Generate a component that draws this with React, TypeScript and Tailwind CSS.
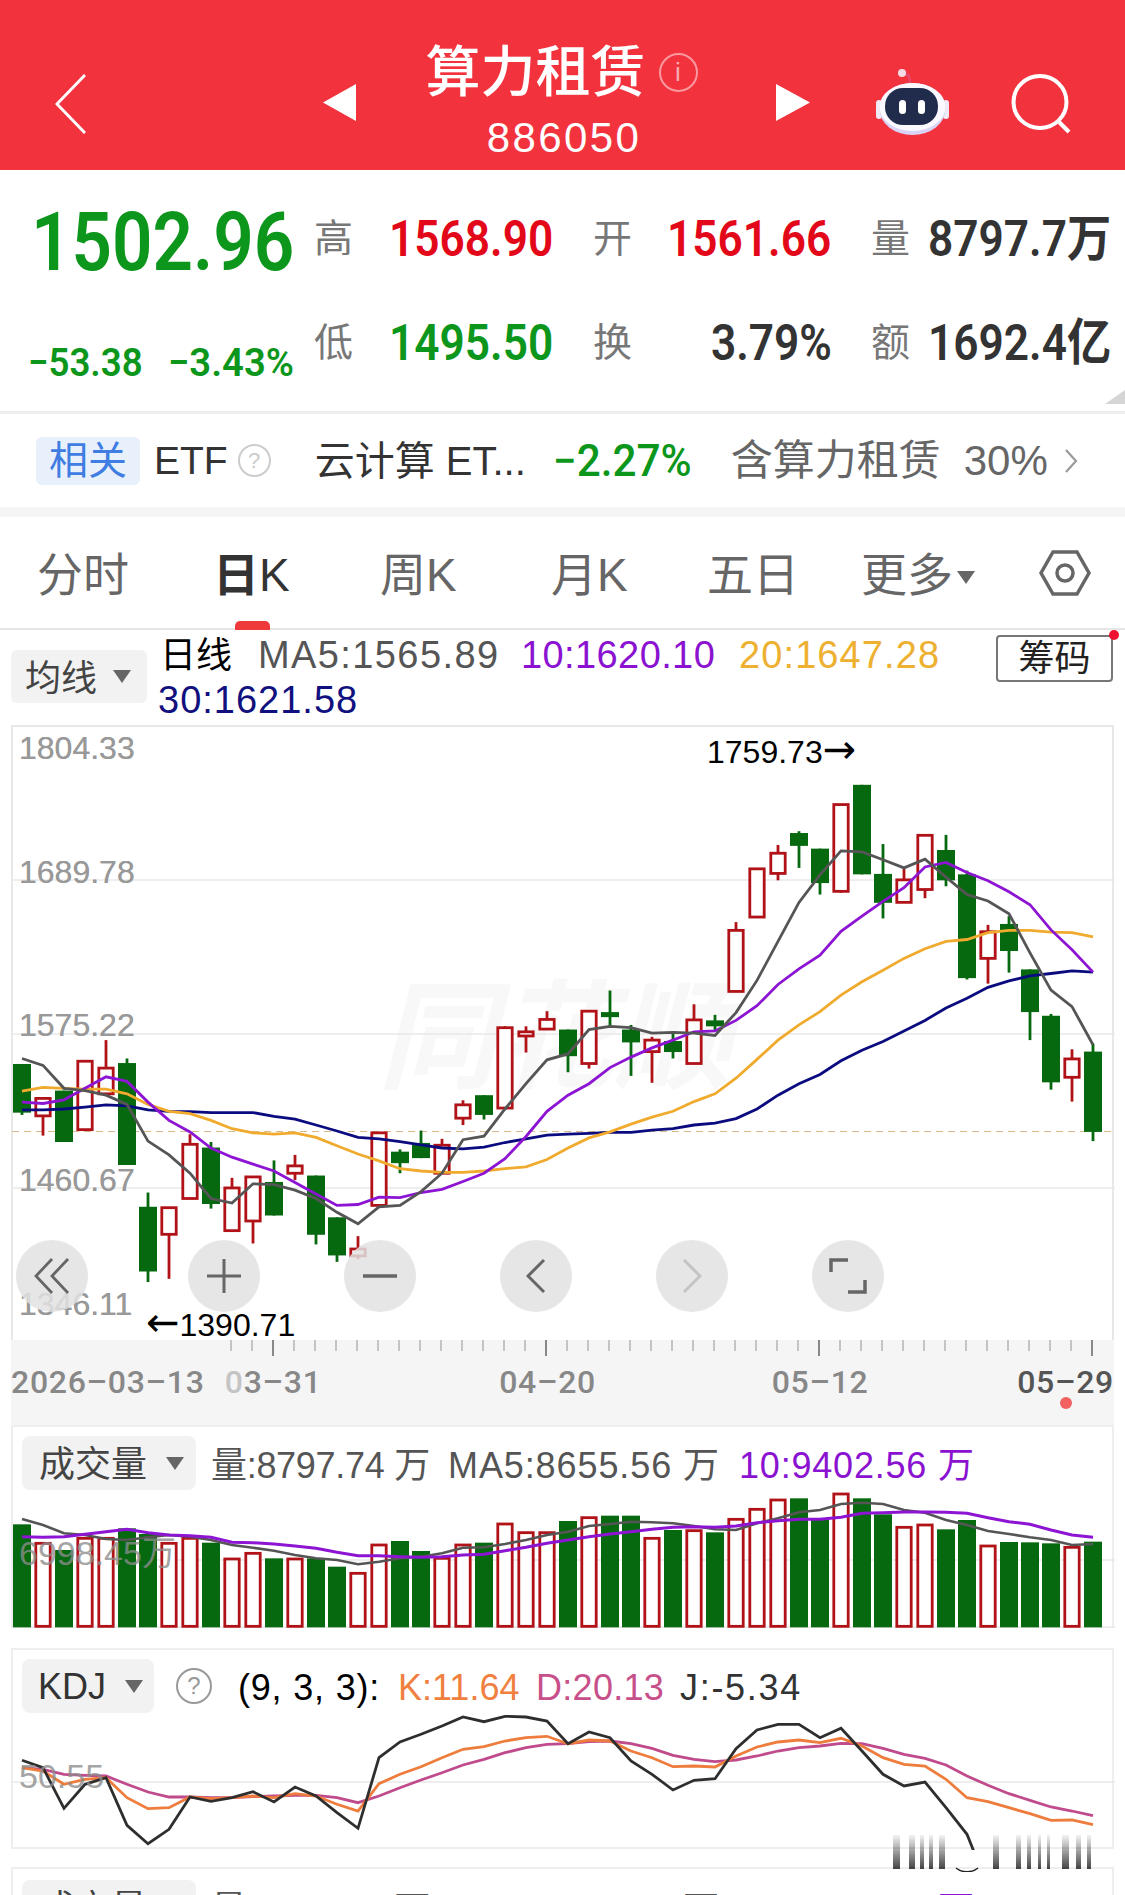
const GREEN = '#07690f';
const RED = '#b01218';

type Candle = [0 | 1, number, number, number, number];

// [up, bodyTop, bodyBottom, wickTop, wickBottom]
const candles: Candle[] = [
  [0, 747, 853, 747, 858], [1, 822, 860, 822, 903], [0, 805, 917, 805, 917], [1, 741, 890, 741, 890],
  [1, 756, 812, 695, 812], [0, 745, 967, 735, 967], [0, 1058, 1199, 1027, 1222], [1, 1060, 1118, 1060, 1215],
  [1, 922, 1040, 900, 1040], [0, 929, 1052, 917, 1062], [1, 1017, 1110, 995, 1110], [1, 993, 1089, 993, 1138],
  [0, 1004, 1077, 957, 1077], [1, 969, 985, 945, 1000], [0, 990, 1119, 990, 1140], [0, 1081, 1164, 1081, 1178],
  [1, 1150, 1165, 1122, 1172], [1, 897, 1055, 897, 1055], [0, 938, 963, 933, 985], [0, 919, 952, 892, 952],
  [1, 924, 985, 910, 985], [1, 836, 865, 826, 880], [0, 815, 858, 815, 868], [1, 668, 843, 665, 843],
  [1, 677, 686, 665, 722], [1, 650, 671, 632, 671], [0, 672, 730, 672, 765], [1, 632, 746, 632, 757],
  [0, 634, 645, 587, 665], [0, 672, 700, 662, 773], [1, 695, 720, 688, 788], [0, 697, 721, 680, 735],
  [1, 651, 746, 617, 746], [0, 652, 665, 640, 675], [1, 456, 589, 438, 589], [1, 322, 427, 322, 427],
  [1, 288, 332, 270, 347], [0, 244, 272, 240, 320], [0, 278, 353, 278, 378], [1, 182, 371, 182, 374],
  [0, 139, 334, 139, 334], [0, 333, 396, 268, 430], [1, 346, 395, 322, 395], [1, 249, 367, 249, 386],
  [0, 281, 347, 248, 360], [0, 334, 560, 326, 563], [1, 459, 517, 444, 572], [0, 442, 501, 425, 548],
  [0, 541, 634, 541, 695], [0, 642, 787, 638, 803], [1, 736, 776, 715, 829], [0, 720, 895, 703, 915],
];

const ma5 = [735, 750, 800, 805, 815, 835, 915, 945, 985, 1040, 1050, 1008, 1010, 1022, 1040, 1070, 1095, 1058, 1055, 1025, 985, 912, 904, 845, 790, 738, 725, 672, 665, 668, 680, 678, 680, 685, 635, 565, 480, 395, 335, 283, 285, 302, 320, 301, 340, 378, 392, 420, 505, 586, 622, 705];
const ma10 = [830, 833, 825, 800, 775, 785, 830, 870, 895, 930, 950, 965, 980, 1005, 1030, 1055, 1053, 1037, 1038, 1027, 1020, 1003, 985, 953, 905, 850, 815, 790, 755, 732, 712, 695, 677, 675, 652, 620, 574, 540, 510, 458, 425, 393, 363, 318, 308, 330, 348, 372, 400, 455, 498, 547];
const ma20 = [806, 798, 800, 802, 802, 812, 835, 850, 855, 870, 888, 897, 900, 897, 907, 925, 943, 958, 975, 980, 983, 983, 980, 975, 971, 955, 930, 908, 895, 878, 863, 850, 829, 812, 778, 737, 695, 662, 633, 597, 568, 543, 517, 496, 480, 476, 461, 456, 456, 460, 461, 470];
const ma30 = [847, 847, 845, 841, 836, 838, 847, 850, 851, 853, 853, 853, 861, 867, 880, 893, 907, 910, 916, 923, 930, 932, 928, 918, 910, 902, 900, 898, 896, 896, 891, 888, 880, 876, 866, 845, 815, 790, 770, 740, 717, 698, 675, 652, 625, 604, 580, 566, 555, 550, 544, 547];

const volumes = [313, 370, 390, 355, 355, 325, 342, 370, 355, 368, 417, 400, 415, 417, 415, 440, 460, 375, 363, 393, 415, 375, 368, 312, 338, 338, 303, 293, 287, 287, 355, 330, 332, 337, 298, 268, 240, 235, 300, 222, 235, 283, 322, 315, 328, 300, 378, 366, 367, 370, 382, 365];
const volMa5 = [297, 315, 340, 345, 357, 360, 352, 345, 350, 360, 375, 383, 392, 405, 415, 420, 433, 425, 415, 410, 400, 383, 382, 372, 360, 345, 335, 318, 312, 305, 307, 310, 318, 328, 330, 310, 295, 277, 270, 252, 248, 252, 270, 278, 300, 315, 333, 342, 352, 360, 375, 372];
const volMa10 = [350, 352, 350, 343, 335, 328, 338, 345, 347, 352, 367, 368, 372, 378, 385, 397, 407, 407, 410, 412, 410, 405, 403, 392, 382, 370, 360, 350, 342, 335, 328, 322, 320, 322, 318, 308, 302, 298, 298, 292, 280, 278, 276, 276, 277, 280, 293, 305, 313, 330, 345, 352];

const kdjJ = [1018, 1040, 1162, 1090, 1070, 1213, 1268, 1225, 1128, 1141, 1130, 1112, 1143, 1098, 1125, 1175, 1222, 1010, 963, 940, 915, 888, 902, 886, 888, 900, 968, 933, 950, 1020, 1060, 1107, 1078, 1073, 983, 927, 910, 910, 950, 922, 990, 1060, 1095, 1083, 1160, 1240];
const kdjK = [1040, 1050, 1090, 1075, 1070, 1130, 1163, 1160, 1128, 1133, 1130, 1125, 1130, 1118, 1125, 1150, 1170, 1088, 1060, 1037, 1010, 985, 977, 960, 950, 946, 968, 957, 960, 990, 1010, 1037, 1035, 1038, 1005, 978, 963, 957, 965, 952, 975, 1010, 1030, 1035, 1075, 1130, 1142, 1160, 1178, 1198, 1197, 1211];
const kdjD = [1040, 1045, 1060, 1063, 1065, 1090, 1113, 1128, 1128, 1130, 1130, 1127, 1125, 1123, 1123, 1130, 1145, 1125, 1100, 1077, 1055, 1032, 1015, 995, 980, 970, 968, 962, 960, 968, 982, 1003, 1015, 1022, 1017, 1005, 990, 980, 975, 967, 968, 982, 1000, 1012, 1032, 1065, 1093, 1118, 1138, 1158, 1170, 1184];

const cx = (i: number) => 21 + 21 * i;
const py = (z: number) => 720 + z / 2.178;
const ly = (z: number) => 1420 + z / 3;
const points = (values: number[], y: (z: number) => number) => values.map((v, i) => `${cx(i)},${y(v).toFixed(1)}`).join(' ');

function PriceChart() {
  return (
    <svg className="absolute -left-px -top-px" width={1103} height={615} viewBox="11 725 1103 615">
      {[879, 1033, 1187].map((y) => (
        <line key={y} x1={11} x2={1114} y1={y} y2={y} stroke="#e8e8e8" strokeWidth={1.5} />
      ))}
      <line x1={11} x2={1114} y1={1130.5} y2={1130.5} stroke="#d9b98c" strokeWidth={1} strokeDasharray="7 5" />
      {candles.map(([up, top, bottom, wickTop, wickBottom], i) => {
        const x = cx(i);
        const color = up ? RED : GREEN;
        return (
          <g key={i}>
            <line x1={x} x2={x} y1={py(wickTop)} y2={py(wickBottom)} stroke={color} strokeWidth={2.8} />
            {up ? (
              <rect x={x - 7.2} y={py(top)} width={14.4} height={py(bottom) - py(top)} fill="#fff" stroke={color} strokeWidth={2.8} />
            ) : (
              <rect x={x - 9} y={py(top)} width={18} height={py(bottom) - py(top)} fill={color} />
            )}
          </g>
        );
      })}
      <polyline points={points(ma30, py)} fill="none" stroke="#0b0b80" strokeWidth={2.8} />
      <polyline points={points(ma20, py)} fill="none" stroke="#f0ab2e" strokeWidth={2.8} />
      <polyline points={points(ma10, py)} fill="none" stroke="#8c14d2" strokeWidth={2.8} />
      <polyline points={points(ma5, py)} fill="none" stroke="#555555" strokeWidth={2.8} />
    </svg>
  );
}

function VolumeChart() {
  const base = ly(622);
  return (
    <svg className="absolute -left-px -top-px" width={1103} height={203} viewBox="11 1426 1103 203">
      <line x1={11} x2={1114} y1={1560} y2={1560} stroke="#e8e8e8" strokeWidth={1.5} />
      <line x1={11} x2={1114} y1={base} y2={base} stroke="#e8e8e8" strokeWidth={1.5} />
      {volumes.map((v, i) => {
        const x = cx(i);
        return candles[i][0] ? (
          <rect key={i} x={x - 7.2} y={ly(v)} width={14.4} height={base - ly(v) - 1} fill="#fff" stroke={RED} strokeWidth={2.8} />
        ) : (
          <rect key={i} x={x - 9} y={ly(v)} width={18} height={base - ly(v)} fill={GREEN} />
        );
      })}
      <polyline points={points(volMa5, ly)} fill="none" stroke="#555555" strokeWidth={2.6} />
      <polyline points={points(volMa10, ly)} fill="none" stroke="#8c14d2" strokeWidth={3} />
    </svg>
  );
}

function KdjChart() {
  const lastJ = `${points(kdjJ, ly)} ${cx(45) + 8},${ly(1300)}`;
  return (
    <svg className="absolute -left-px -top-px" width={1103} height={201} viewBox="11 1648 1103 201">
      <line x1={11} x2={1114} y1={1781} y2={1781} stroke="#e8e8e8" strokeWidth={1.5} />
      <polyline points={points(kdjD, ly)} fill="none" stroke="#c04b8c" strokeWidth={2.8} />
      <polyline points={points(kdjK, ly)} fill="none" stroke="#ee7c3c" strokeWidth={2.8} />
      <polyline points={lastJ} fill="none" stroke="#2e2e2e" strokeWidth={2.8} />
    </svg>
  );
}

function Robot() {
  return (
    <svg width={74} height={68} viewBox="0 0 74 68">
      <path d="M28 5C33 5 35 9 35 15" fill="none" stroke="#e5486a" strokeWidth={2.5} />
      <circle cx={27} cy={5} r={4} fill="#f3dce6" />
      <rect x={1} y={32} width={6} height={19} rx={3} fill="#f1e9f6" />
      <rect x={68} y={32} width={6} height={19} rx={3} fill="#f1e9f6" />
      <ellipse cx={37.5} cy={41} rx={33} ry={26} fill="#d9d4f6" />
      <ellipse cx={37.5} cy={39} rx={33} ry={24} fill="#fbf9ff" />
      <rect x={10} y={20} width={53} height={37} rx={18} fill="#212c4c" />
      <rect x={24} y={32} width={7} height={14} rx={3.5} fill="#fff" />
      <rect x={43} y={32} width={7} height={14} rx={3.5} fill="#fff" />
    </svg>
  );
}

const Caret = ({ className }: { className: string }) => (
  <svg className={className} width={18} height={13} viewBox="0 0 18 13">
    <path d="M0 0H18L9 13Z" fill="#666" />
  </svg>
);

const chartButton = 'w-[72px] h-[72px] rounded-full bg-[#e2e2e2]/85 flex items-center justify-center shrink-0';
const cell = 'flex items-center';
const label = 'text-[39px] text-[#777]';
const value = "font-['Roboto','Noto_Sans_CJK_SC',sans-serif] text-[50px] font-semibold origin-left scale-x-[0.885] whitespace-nowrap -ml-px";
const axisLabel = "absolute left-[6px] text-[32px] leading-[36px] text-[#999] [text-shadow:0_0_0.6px_#999]";

export default function App() {
  return (
    <div className="relative w-[1125px] h-[1895px] overflow-hidden bg-white font-['Liberation_Sans','Noto_Sans_CJK_SC',sans-serif]">
      {/* Red title bar */}
      <header className="h-[170px] bg-[#f2333e] flex text-white">
        <div className="w-[323px] pl-[55px] pt-[74px]">
          <svg width={31} height={60} viewBox="0 0 31 60">
            <path d="M30 1L2 30L30 59" fill="none" stroke="#fff" strokeWidth={3} />
          </svg>
        </div>
        <svg width={33} height={37} viewBox="0 0 33 37" className="mt-[84px]">
          <path d="M33 0V37L0 18.5Z" fill="#fff" />
        </svg>
        <div className="w-[420px] flex flex-col items-center">
          <div className="flex items-center h-[80px] mt-[32px] -ml-[9px]">
            <span className="text-[55px] leading-none font-medium">算力租赁</span>
            <span className="ml-[13px] w-[39px] h-[39px] rounded-full border-2 border-white/50 text-white/60 text-[26px] leading-none flex items-center justify-center">i</span>
          </div>
          <span className="text-[42px] leading-none tracking-[2.4px] mt-[5px] -ml-[4px]">886050</span>
        </div>
        <svg width={34} height={37} viewBox="0 0 34 37" className="mt-[84px]">
          <path d="M0 0V37L34 18.5Z" fill="#fff" />
        </svg>
        <div className="ml-[65px] pt-[68px]">
          <Robot />
        </div>
        <svg width={60} height={60} viewBox="0 0 60 60" className="ml-[62px] mt-[74px]">
          <ellipse cx={29} cy={28} rx={26.5} ry={26} fill="none" stroke="#fff" strokeWidth={4} />
          <path d="M47 47L58 58" fill="none" stroke="#fff" strokeWidth={4} />
        </svg>
      </header>

      {/* Quote block */}
      <section className="relative h-[241px] pt-[17px] grid grid-cols-[314px_76px_162px_41px_75px_164px_39px_58px_181px] grid-rows-[104px_104px] font-['Roboto','Noto_Sans_CJK_SC',sans-serif]">
        <div className="text-[82px] leading-none font-semibold text-[#0d961c] ml-[31px] origin-left scale-x-[0.865] self-center mt-[5px] whitespace-nowrap">1502.96</div>
        <div className={`${cell} ${label}`}>高</div>
        <div className={`${cell} ${value} text-[#e3071a]`}>1568.90</div>
        <div />
        <div className={`${cell} ${label}`}>开</div>
        <div className={`${cell} ${value} text-[#e3071a]`}>1561.66</div>
        <div />
        <div className={`${cell} ${label}`}>量</div>
        <div className={`${cell} ${value} text-[#333]`}>8797.7万</div>

        <div className="flex pl-[28px] pt-[53px] text-[39px] leading-none font-semibold text-[#0d961c] whitespace-nowrap">
          <span className="w-[140px] origin-left scale-x-[0.94]">−53.38</span>
          <span className="origin-left scale-x-[0.98]">−3.43%</span>
        </div>
        <div className={`${cell} ${label}`}>低</div>
        <div className={`${cell} ${value} text-[#0d961c]`}>1495.50</div>
        <div />
        <div className={`${cell} ${label}`}>换</div>
        <div className={`${cell} ${value} text-[#333] justify-end origin-right`}>3.79%</div>
        <div />
        <div className={`${cell} ${label}`}>额</div>
        <div className={`${cell} ${value} text-[#333]`}>1692.4亿</div>
        <svg className="absolute right-0 bottom-[7px]" width={20} height={14} viewBox="0 0 20 14">
          <path d="M20 0V14H0Z" fill="#d5d5d5" />
        </svg>
      </section>

      {/* Related ETF row */}
      <section className="h-[96px] border-t-[3px] border-[#eeeeee] flex items-center pl-[36px] text-[39px] leading-none">
        <span className="w-[104px] h-[48px] rounded-[6px] bg-[#e8f0fc] text-[#3f7de2] flex items-center justify-center">相关</span>
        <span className="ml-[14px] text-[#333]">ETF</span>
        <span className="ml-[10px] w-[33px] h-[33px] rounded-full border-2 border-[#ccc] text-[#ccc] text-[22px] flex items-center justify-center">?</span>
        <span className="ml-[44px] w-[238px] text-[40px] text-[#333] whitespace-nowrap">云计算 ET...</span>
        <span className="w-[178px] text-[#0d961c] text-[44px] font-['Roboto',sans-serif] font-medium origin-left scale-x-[0.96]">−2.27%</span>
        <span className="w-[233px] text-[#666] text-[42px]">含算力租赁</span>
        <span className="w-[100px] text-[#666] text-[42px]">30%</span>
        <svg width={14} height={26} viewBox="0 0 14 26">
          <path d="M2 2L12 13L2 24" fill="none" stroke="#999" strokeWidth={2.2} />
        </svg>
      </section>
      <div className="h-[10px] bg-[#f5f5f5]" />

      {/* Period tabs */}
      <nav className="relative h-[113px] border-b-2 border-[#e6e6e6] pl-[37px] flex items-start pt-[33px] text-[46px] leading-[50px] text-[#666]">
        <span className="w-[176px]">分时</span>
        <span className="w-[167px] text-[#333] font-medium">
          <span className="font-bold">日</span>K
        </span>
        <span className="w-[171px]">周K</span>
        <span className="w-[156px]">月K</span>
        <span className="w-[154px]">五日</span>
        <span className="w-[178px] flex items-center">
          更多
          <Caret className="ml-[4px] mt-[4px]" />
        </span>
        <svg width={52} height={46} viewBox="0 0 52 46">
          <path d="M14 2H38L50 23L38 44H14L2 23Z" fill="none" stroke="#666" strokeWidth={3.5} />
          <circle cx={26} cy={23} r={8} fill="none" stroke="#666" strokeWidth={3.5} />
        </svg>
        <span className="absolute left-[235px] -bottom-[2px] w-[35px] h-[9px] rounded-t-[5px] bg-[#ee3a3a]" />
      </nav>

      {/* MA legend */}
      <section className="relative h-[95px] flex pl-[11px] pt-[3px] text-[38px] leading-[45px] tracking-[1.3px] whitespace-nowrap">
        <div className="mt-[17px] w-[136px] h-[53px] rounded-[6px] bg-[#f2f2f2] flex items-center pl-[14px] pt-[4px] text-[#444] text-[36px] tracking-normal">
          均线
          <Caret className="ml-[16px] -mt-[4px]" />
        </div>
        <div className="ml-[11px]">
          <div className="flex">
            <span className="w-[100px] pl-[2px] tracking-normal text-[36px] text-black">日线</span>
            <span className="w-[263px] text-[#555] tracking-[1.4px]">MA5:1565.89</span>
            <span className="w-[218px] text-[#8a12d0] tracking-[0.4px]">10:1620.10</span>
            <span className="text-[#eeb030] tracking-[1.1px]">20:1647.28</span>
          </div>
          <div className="text-[#10107e] tracking-[1px]">30:1621.58</div>
        </div>
        <div className="absolute left-[996px] top-[5px] w-[117px] h-[47px] rounded-[4px] border-2 border-[#777] text-[36px] leading-[43px] tracking-normal text-center text-[#222]">
          筹码
        </div>
        <span className="absolute left-[1109px] top-[0px] w-[10px] h-[10px] rounded-full bg-[#f01030]" />
      </section>

      {/* Candlestick chart */}
      <section className="relative mx-[11px] h-[615px] border-x-2 border-t-2 border-[#e8e8e8]">
        <span className="absolute left-[365px] top-[252px] text-[118px] leading-none font-bold italic text-[#f8f8f8]">同花顺</span>
        <PriceChart />
        <span className={`${axisLabel} top-[3px]`}>1804.33</span>
        <span className={`${axisLabel} top-[127px]`}>1689.78</span>
        <span className={`${axisLabel} top-[280px]`}>1575.22</span>
        <span className={`${axisLabel} top-[435px]`}>1460.67</span>
        <span className={`${axisLabel} top-[559px]`}>1346.11</span>
        <span className="absolute left-[694px] top-[4px] text-[32px] leading-[36px] text-black whitespace-nowrap">
          1759.73<span className="font-['DejaVu_Sans'] text-[40px]">→</span>
        </span>
        <span className="absolute left-[133px] top-[577px] text-[32px] leading-[36px] text-black whitespace-nowrap">
          <span className="font-['DejaVu_Sans'] text-[40px]">←</span>1390.71
        </span>
        <div className="absolute left-[3px] top-[513px] flex">
          <div className={chartButton}>
            <svg width={36} height={38} viewBox="0 0 36 38">
              <path d="M18 2L2 19L18 36M34 2L18 19L34 36" fill="none" stroke="#666" strokeWidth={2.8} />
            </svg>
          </div>
          <div className={`${chartButton} ml-[100px]`}>
            <svg width={34} height={34} viewBox="0 0 34 34">
              <path d="M17 0V34M0 17H34" fill="none" stroke="#666" strokeWidth={3} />
            </svg>
          </div>
          <div className={`${chartButton} ml-[84px]`}>
            <svg width={34} height={4} viewBox="0 0 34 4">
              <path d="M0 2H34" fill="none" stroke="#666" strokeWidth={3.4} />
            </svg>
          </div>
          <div className={`${chartButton} ml-[84px]`}>
            <svg width={20} height={36} viewBox="0 0 20 36">
              <path d="M18 2L2 18L18 34" fill="none" stroke="#666" strokeWidth={3} />
            </svg>
          </div>
          <div className={`${chartButton} ml-[84px]`}>
            <svg width={20} height={36} viewBox="0 0 20 36">
              <path d="M2 2L18 18L2 34" fill="none" stroke="#c4c4c4" strokeWidth={3} />
            </svg>
          </div>
          <div className={`${chartButton} ml-[84px]`}>
            <svg width={38} height={38} viewBox="0 0 38 38">
              <path d="M2 15V3H19M36 23V35H19" fill="none" stroke="#666" strokeWidth={3.5} />
            </svg>
          </div>
        </div>
      </section>

      {/* Date axis */}
      <section className="relative mx-[11px] h-[85px] bg-[#f5f5f5] font-['Roboto',sans-serif] text-[32px] leading-none font-medium tracking-[0.7px] text-[#888]">
        <svg className="absolute left-0 top-0" width={1103} height={20} viewBox="11 1340 1103 20">
          {candles.map((_, i) =>
            i < 10 ? null : (
              <line
                key={i}
                x1={cx(i)}
                x2={cx(i)}
                y1={1340}
                y2={(i - 12) % 13 === 0 ? 1356 : 1351}
                stroke={(i - 12) % 13 === 0 ? '#888' : '#c4c4c4'}
                strokeWidth={2}
              />
            ),
          )}
        </svg>
        <div className="flex pt-[26px] whitespace-nowrap">
          <span className="w-[215px]">2026–03–13</span>
          <span className="w-[276px]">
            <span className="text-[#c4c4c4]">0</span>3–31
          </span>
          <span className="w-[274px]">04–20</span>
          <span className="w-[247px]">05–12</span>
          <span className="text-[#555]">05–29</span>
        </div>
        <span className="absolute left-[1049px] top-[57px] w-[12px] h-[12px] rounded-full bg-[#f26060]" />
      </section>

      {/* Volume panel */}
      <section className="relative mx-[11px] h-[203px] border-x-2 border-t-2 border-[#eeeeee]">
        <VolumeChart />
        <div className="relative flex items-center h-[54px] mt-[9px] ml-[9px] text-[36px] leading-none whitespace-nowrap">
          <div className="w-[174px] h-[54px] rounded-[8px] bg-[#f2f2f2] flex items-center pl-[17px] pt-[3px] text-[#444]">
            成交量
            <Caret className="ml-[19px] -mt-[3px]" />
          </div>
          <span className="ml-[15px] pt-[6px] w-[237px] text-[#555] tracking-[-0.3px]">量:8797.74 万</span>
          <span className="w-[291px] pt-[6px] text-[#555] tracking-[0.9px]">MA5:8655.56 万</span>
          <span className="text-[#8a12d0] pt-[6px] tracking-[0.8px]">10:9402.56 万</span>
        </div>
        <span className="absolute left-[6px] top-[107px] text-[34px] leading-[38px] text-[#8c8c8c]/80">6998.45万</span>
      </section>

      {/* KDJ panel */}
      <section className="relative mx-[11px] mt-[20px] h-[201px] border-x-2 border-y-2 border-[#eeeeee]">
        <KdjChart />
        <div className="relative flex items-center h-[54px] mt-[9px] ml-[9px] text-[36px] leading-none whitespace-nowrap">
          <div className="w-[132px] h-[54px] rounded-[8px] bg-[#f2f2f2] flex items-center pl-[16px] pt-[2px] text-[#333]">
            KDJ
            <Caret className="ml-[19px] -mt-[2px]" />
          </div>
          <span className="ml-[22px] w-[36px] h-[36px] rounded-full border-2 border-[#999] text-[#999] text-[24px] flex items-center justify-center">?</span>
          <span className="ml-[26px] pt-[3px] w-[160px] text-black tracking-[0.8px]">(9, 3, 3):</span>
          <span className="w-[138px] pt-[3px] text-[#f08040]">K:11.64</span>
          <span className="w-[144px] pt-[3px] text-[#c8508a] tracking-[0.3px]">D:20.13</span>
          <span className="pt-[3px] text-[#333] tracking-[1.7px]">J:-5.34</span>
        </div>
        <span className="absolute left-[6px] top-[107px] text-[34px] leading-[38px] text-[#8c8c8c]/80">50.55</span>
      </section>

      {/* Next panel, cut by the page edge */}
      <section className="mx-[11px] mt-[18px] h-[60px] border-x-2 border-t-2 border-[#eeeeee]">
        <div className="flex items-center h-[54px] mt-[11px] ml-[9px] text-[36px] leading-none whitespace-nowrap">
          <div className="w-[174px] h-[54px] rounded-[8px] bg-[#f2f2f2] flex items-center pl-[17px] pt-[3px] text-[#444]">成交量</div>
          <span className="ml-[15px] pt-[6px] w-[237px] text-[#555] tracking-[-0.3px]">量:8797.74 万</span>
          <span className="w-[291px] pt-[6px] text-[#555] tracking-[0.9px]">MA5:8655.56 万</span>
          <span className="text-[#8a12d0] pt-[6px] tracking-[0.8px]">10:9402.56 万</span>
        </div>
      </section>

      {/* Blurred stamp in the corner */}
      <svg className="absolute left-[892px] top-[1832px]" width={210} height={40} viewBox="0 0 210 40">
        <defs>
          <linearGradient id="stamp" x1="0" x2="0" y1="0" y2="1">
            <stop offset="0" stopColor="#222" stopOpacity={0.05} />
            <stop offset="1" stopColor="#222" stopOpacity={0.85} />
          </linearGradient>
        </defs>
        {[[1, 7], [17, 6], [28, 4], [37, 4], [47, 6], [101, 6], [124, 5], [135, 4], [146, 3], [155, 3], [170, 7], [184, 5], [195, 4]].map(([x, w]) => (
          <rect key={x} x={x} y={3} width={w} height={34} fill="url(#stamp)" />
        ))}
        <path d="M64 36C70 41 80 41 86 36" fill="none" stroke="#222" strokeWidth={1.5} />
      </svg>
    </div>
  );
}
